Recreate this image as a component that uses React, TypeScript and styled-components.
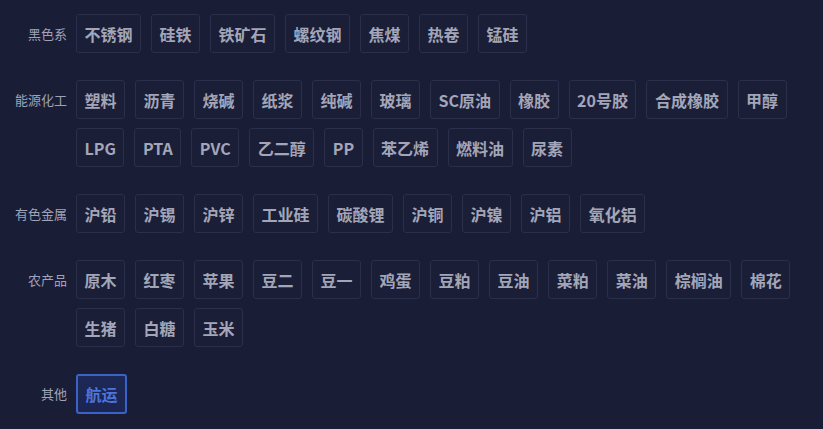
import styled, { createGlobalStyle } from "styled-components";

const GlobalStyle = createGlobalStyle`
  html, body {
    margin: 0;
    padding: 0;
    background: #1a1d36;
  }
  body {
    font-family: "Noto Sans CJK SC", "Noto Sans", sans-serif;
  }
`;

interface Group {
  label: string;
  items: string[];
}

const groups: Group[] = [
  {
    label: "黑色系",
    items: ["不锈钢", "硅铁", "铁矿石", "螺纹钢", "焦煤", "热卷", "锰硅"],
  },
  {
    label: "能源化工",
    items: [
      "塑料", "沥青", "烧碱", "纸浆", "纯碱", "玻璃", "SC原油", "橡胶",
      "20号胶", "合成橡胶", "甲醇", "LPG", "PTA", "PVC", "乙二醇", "PP",
      "苯乙烯", "燃料油", "尿素",
    ],
  },
  {
    label: "有色金属",
    items: ["沪铅", "沪锡", "沪锌", "工业硅", "碳酸锂", "沪铜", "沪镍", "沪铝", "氧化铝"],
  },
  {
    label: "农产品",
    items: [
      "原木", "红枣", "苹果", "豆二", "豆一", "鸡蛋", "豆粕", "豆油", "菜粕",
      "菜油", "棕榈油", "棉花", "生猪", "白糖", "玉米",
    ],
  },
  {
    label: "其他",
    items: ["航运"],
  },
];

const active = "航运";

export default function App() {
  return (
    <>
      <GlobalStyle />
      <Page>
        {groups.map((g) => (
          <Row key={g.label}>
            <Label>{g.label}</Label>
            <Tags>
              {g.items.map((item) => (
                <Tag key={item} $active={item === active}>
                  {item}
                </Tag>
              ))}
            </Tags>
          </Row>
        ))}
      </Page>
    </>
  );
}

const Page = styled.div`
  display: flex;
  flex-direction: column;
  gap: 27px;
  padding: 14px 0 0 0;
  width: 823px;
  min-height: 429px;
  box-sizing: border-box;
  background: #1a1d36;
`;

const Row = styled.div`
  display: flex;
  align-items: flex-start;
`;

const Label = styled.span`
  width: 67px;
  flex-shrink: 0;
  padding-right: 9px;
  text-align: right;
  font-size: 13px;
  line-height: 39px;
  color: #9fa3b8;
`;

const Tags = styled.div`
  display: flex;
  flex-wrap: wrap;
  gap: 9px 10px;
  flex: 1;
`;

const Tag = styled.button<{ $active?: boolean }>`
  box-sizing: border-box;
  height: ${(p) => (p.$active ? "40px" : "39px")};
  padding: 0 7.5px;
  border: ${(p) => (p.$active ? "2px solid #3a63c9" : "1px solid #2b2f4a")};
  border-radius: 3px;
  background: ${(p) =>
    p.$active ? "linear-gradient(180deg, #1d2856 0%, #1c2550 100%)" : "#1b1e37"};
  color: ${(p) => (p.$active ? "#4b74dc" : "#a3a6b8")};
  font-family: "Noto Sans CJK SC", "Noto Sans", sans-serif;
  font-size: 16px;
  font-weight: 700;
  line-height: 1;
  cursor: pointer;
  white-space: nowrap;
`;
